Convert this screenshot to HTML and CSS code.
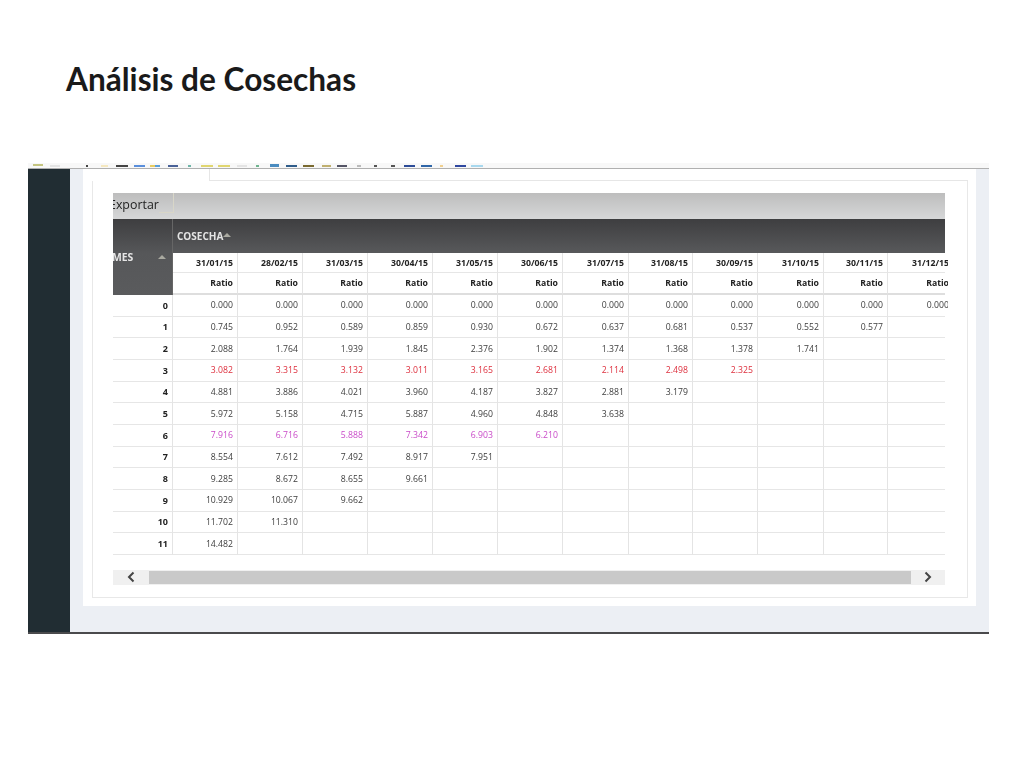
FILE: index.html
```html
<!DOCTYPE html>
<html lang="es">
<head>
<meta charset="utf-8">
<title>Análisis de Cosechas</title>
<link rel="stylesheet" href="styles.css">
</head>
<body>
<h1 class="title">Análisis de Cosechas</h1>
<div class="shot">
  <svg class="toolbar" width="961" height="5" viewBox="0 0 961 5" aria-hidden="true">
    <rect x="5" y="1" width="10" height="2" fill="#c5c580"/><rect x="22" y="2" width="10" height="2" fill="#e4e4e4"/>
    <rect x="58" y="2" width="2" height="2" fill="#444"/><rect x="73" y="2" width="7" height="2" fill="#f5e8c0"/>
    <rect x="88" y="2" width="12" height="2" fill="#444"/><rect x="106" y="2" width="11" height="2" fill="#5a8fdc"/>
    <rect x="122" y="2" width="5" height="2" fill="#e8cc60"/><rect x="127" y="2" width="5" height="2" fill="#5a9fdc"/>
    <rect x="140" y="2" width="10" height="2" fill="#4a6298"/><rect x="160" y="2" width="3" height="2" fill="#70b5a8"/>
    <rect x="173" y="2" width="12" height="2" fill="#e0d670"/><rect x="190" y="2" width="12" height="2" fill="#e0d670"/>
    <rect x="209" y="2" width="10" height="2" fill="#e4e4e4"/><rect x="228" y="2" width="3" height="2" fill="#70b590"/>
    <rect x="242" y="1" width="9" height="3" fill="#4a8cc0"/><rect x="258" y="2" width="11" height="2" fill="#2f5c8a"/>
    <rect x="275" y="2" width="11" height="2" fill="#7a6a30"/><rect x="294" y="2" width="9" height="2" fill="#c0b070"/>
    <rect x="309" y="2" width="10" height="2" fill="#556"/><rect x="329" y="2" width="4" height="2" fill="#bbb"/>
    <rect x="346" y="2" width="3" height="2" fill="#555"/><rect x="363" y="2" width="4" height="2" fill="#555"/>
    <rect x="376" y="2" width="11" height="2" fill="#2c4c98"/><rect x="393" y="2" width="11" height="2" fill="#2f66a8"/>
    <rect x="412" y="2" width="3" height="2" fill="#f0d090"/><rect x="427" y="2" width="11" height="2" fill="#2f48a0"/>
    <rect x="443" y="2" width="12" height="2" fill="#a8d8ee"/>
  </svg>
  <div class="toolbar-line"></div>
  <div class="main">
    <aside class="sidebar"></aside>
    <div class="content">
      <div class="card">
        <div class="tabs"><div class="tab"></div><div class="tab-rest"></div></div>
        <div class="panel">
          <div class="export"><span class="export-label">Exportar</span><span class="export-btn"></span></div>
          <div class="grid-clip">
            <table class="grid">
              <colgroup>
                <col class="c60"><col class="c65"><col class="c65"><col class="c65"><col class="c65"><col class="c65"><col class="c65"><col class="c66"><col class="c64"><col class="c65"><col class="c66"><col class="c64"><col class="c57">
              </colgroup>
              <thead>
                <tr class="r-dark">
                  <th class="mes" rowspan="3"><span class="mes-in"><span>MES</span><i class="tri"></i></span></th>
                  <th class="cosecha" colspan="12">COSECHA<i class="tri tri-up"></i></th>
                </tr>
                <tr class="r-date">
                  <th>31/01/15</th><th>28/02/15</th><th>31/03/15</th><th>30/04/15</th><th>31/05/15</th><th>30/06/15</th><th>31/07/15</th><th>31/08/15</th><th>30/09/15</th><th>31/10/15</th><th>30/11/15</th><th class="last"><span>31/12/15</span></th>
                </tr>
                <tr class="r-ratio">
                  <th>Ratio</th><th>Ratio</th><th>Ratio</th><th>Ratio</th><th>Ratio</th><th>Ratio</th><th>Ratio</th><th>Ratio</th><th>Ratio</th><th>Ratio</th><th>Ratio</th><th class="last"><span>Ratio</span></th>
                </tr>
              </thead>
              <tbody>
                <tr><th>0</th><td>0.000</td><td>0.000</td><td>0.000</td><td>0.000</td><td>0.000</td><td>0.000</td><td>0.000</td><td>0.000</td><td>0.000</td><td>0.000</td><td>0.000</td><td class="last"><span>0.000</span></td></tr>
                <tr><th>1</th><td>0.745</td><td>0.952</td><td>0.589</td><td>0.859</td><td>0.930</td><td>0.672</td><td>0.637</td><td>0.681</td><td>0.537</td><td>0.552</td><td>0.577</td><td class="last"></td></tr>
                <tr><th>2</th><td>2.088</td><td>1.764</td><td>1.939</td><td>1.845</td><td>2.376</td><td>1.902</td><td>1.374</td><td>1.368</td><td>1.378</td><td>1.741</td><td></td><td class="last"></td></tr>
                <tr class="red"><th>3</th><td>3.082</td><td>3.315</td><td>3.132</td><td>3.011</td><td>3.165</td><td>2.681</td><td>2.114</td><td>2.498</td><td>2.325</td><td></td><td></td><td class="last"></td></tr>
                <tr><th>4</th><td>4.881</td><td>3.886</td><td>4.021</td><td>3.960</td><td>4.187</td><td>3.827</td><td>2.881</td><td>3.179</td><td></td><td></td><td></td><td class="last"></td></tr>
                <tr><th>5</th><td>5.972</td><td>5.158</td><td>4.715</td><td>5.887</td><td>4.960</td><td>4.848</td><td>3.638</td><td></td><td></td><td></td><td></td><td class="last"></td></tr>
                <tr class="pink"><th>6</th><td>7.916</td><td>6.716</td><td>5.888</td><td>7.342</td><td>6.903</td><td>6.210</td><td></td><td></td><td></td><td></td><td></td><td class="last"></td></tr>
                <tr><th>7</th><td>8.554</td><td>7.612</td><td>7.492</td><td>8.917</td><td>7.951</td><td></td><td></td><td></td><td></td><td></td><td></td><td class="last"></td></tr>
                <tr><th>8</th><td>9.285</td><td>8.672</td><td>8.655</td><td>9.661</td><td></td><td></td><td></td><td></td><td></td><td></td><td></td><td class="last"></td></tr>
                <tr><th>9</th><td>10.929</td><td>10.067</td><td>9.662</td><td></td><td></td><td></td><td></td><td></td><td></td><td></td><td></td><td class="last"></td></tr>
                <tr><th>10</th><td>11.702</td><td>11.310</td><td></td><td></td><td></td><td></td><td></td><td></td><td></td><td></td><td></td><td class="last"></td></tr>
                <tr><th>11</th><td>14.482</td><td></td><td></td><td></td><td></td><td></td><td></td><td></td><td></td><td></td><td></td><td class="last"></td></tr>
              </tbody>
            </table>
          </div>
          <div class="scrollbar">
            <span class="sb-btn"><svg width="12" height="12" viewBox="0 0 12 12" aria-hidden="true"><path d="M8.5 1.5 4 6l4.500 4.500" fill="none" stroke="#444" stroke-width="2"/></svg></span>
            <span class="sb-thumb"></span>
            <span class="sb-btn"><svg width="12" height="12" viewBox="0 0 12 12" aria-hidden="true"><path d="M3.500 1.500 8 6l-4.500 4.500" fill="none" stroke="#444" stroke-width="2"/></svg></span>
          </div>
        </div>
      </div>
    </div>
  </div>
  <div class="bottom-line"></div>
</div>
</body>
</html>
```

FILE: styles.css
```css
* { box-sizing: border-box; }
html, body { margin: 0; padding: 0; background: #fff; }
body { width: 1024px; height: 768px; overflow: hidden; font-family: "Open Sans", sans-serif; }

.title {
  margin: 0;
  height: 163px;
  padding: 59px 0 0 66px;
  font: 700 31.6px/40px "Lato", sans-serif;
  color: #1a1a1a;
}

.shot { width: 961px; margin-left: 28px; filter: blur(0.4px); }
.toolbar { display: block; background: #f8f8f8; }
.toolbar-line { height: 1px; background: #b0b0b0; }
.main { display: flex; height: 463px; }
.sidebar { width: 42px; background: #212d33; }
.content { flex: 1; padding: 0 13px 26px; background: #eceff4; }
.card { height: 100%; padding: 0 8px 8px 9px; background: #fff; display: flex; flex-direction: column; }
.bottom-line { height: 2px; background: #4a4a4c; }

.tabs { display: flex; height: 12px; }
.tab { width: 118px; border-right: 1px solid #e6e6e6; }
.tab-rest { flex: 1; border-bottom: 1px solid #e6e6e6; }
.panel { flex: 1; padding: 12px 22px 0 20px; border: 1px solid #e8e8e8; border-top: 0; }

.export {
  display: flex;
  height: 26px;
  overflow: hidden;
  background: linear-gradient(#bdbdbd, #d6d7d8);
}
.export-label { margin-left: -4px; font-size: 12.4px; line-height: 23px; color: #222; }
.export-btn { width: 15px; height: 20px; border-right: 1px solid #d8d6c8; border-bottom: 1px solid #d8d6c8; }

.grid-clip { width: 832px; clip-path: inset(0 -3px 0 0); }
.grid { width: 832px; table-layout: fixed; border-collapse: separate; border-spacing: 0; font-size: 8.7px; color: #3c3c3c; }
.c60 { width: 60px; } .c65 { width: 65px; } .c66 { width: 66px; } .c64 { width: 64px; } .c57 { width: 57px; }
.grid th, .grid td {
  padding: 0 4px 0 0;
  text-align: right;
  white-space: nowrap;
  border-right: 1px solid #e4e4e4;
  border-bottom: 1px solid #e6e6e6;
  font-weight: 400;
}
.grid th { font-weight: 700; color: #222; }
.grid .last { padding: 0; text-align: left; border-right: 0; }
.grid .last span { display: inline-block; width: 61px; text-align: right; }

.r-dark { height: 34px; }
.r-date { height: 20px; }
.r-ratio { height: 22px; }
.r-ratio th { border-bottom: 2px solid #dedede; }
.grid tbody tr { height: 21.67px; }
.grid tbody th { padding-right: 4px; font-size: 9px; }

.grid .mes {
  padding: 0;
  border: 0;
  border-right: 1px solid #666;
  text-align: left;
  color: #e6e6e6;
  font-size: 10.4px;
  background: linear-gradient(#3e3e40, #565759 45%, #5a5b5d);
}
.mes-in { display: flex; align-items: center; justify-content: space-between; padding-right: 6px; margin-left: -1px; }
.grid .cosecha {
  padding: 0 0 0 4px;
  border: 0;
  text-align: left;
  color: #e4e4e4;
  font-size: 10px;
  background: linear-gradient(#3e3e40, #58595b);
}
.tri {
  display: block;
  width: 0;
  height: 0;
  border-left: 4px solid transparent;
  border-right: 4px solid transparent;
  border-bottom: 4px solid #a9a9a0;
}
.tri-up { display: inline-block; margin: 0 0 5px 0; vertical-align: middle; }

.grid .red td { color: #dd2f3d; }
.grid .pink td { color: #c94ac8; }

.scrollbar { display: flex; align-items: center; width: 832px; height: 15px; margin-top: 15px; background: #f0f0f0; }
.sb-btn { display: flex; align-items: center; justify-content: center; width: 36px; height: 15px; }
.sb-btn:last-child { width: 34px; }
.sb-thumb { flex: 1; height: 13px; background: #c9c9c9; }
```
